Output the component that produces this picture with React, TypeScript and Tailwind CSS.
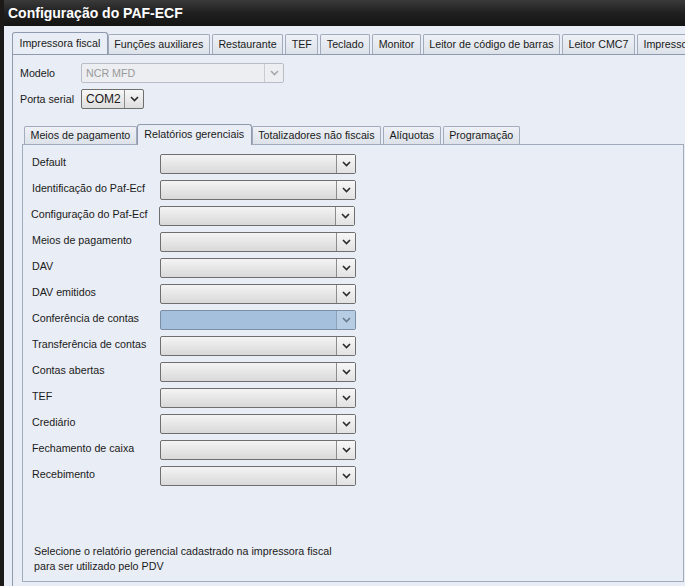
import React from "react";

const topTabs = [
  "Impressora fiscal",
  "Funções auxiliares",
  "Restaurante",
  "TEF",
  "Teclado",
  "Monitor",
  "Leitor de código de barras",
  "Leitor CMC7",
  "Impressora de cozinha",
];

const innerTabs = [
  "Meios de pagamento",
  "Relatórios gerenciais",
  "Totalizadores não fiscais",
  "Alíquotas",
  "Programação",
];

const rows = [
  "Default",
  "Identificação do Paf-Ecf",
  "Configuração do Paf-Ecf",
  "Meios de pagamento",
  "DAV",
  "DAV emitidos",
  "Conferência de contas",
  "Transferência de contas",
  "Contas abertas",
  "TEF",
  "Crediário",
  "Fechamento de caixa",
  "Recebimento",
];

function Chevron({ color = "#2b2b2b" }: { color?: string }) {
  return (
    <svg width="9" height="6" viewBox="0 0 9 6">
      <path d="M1 1 L4.5 4.5 L8 1" fill="none" stroke={color} strokeWidth="1.6" />
    </svg>
  );
}

function Combo({
  width,
  value,
  disabled,
  selected,
}: {
  width: string;
  value?: string;
  disabled?: boolean;
  selected?: boolean;
}) {
  if (disabled) {
    return (
      <div className={`${width} h-[20px] flex rounded-[2px] border border-[#b9bec6] bg-[#eceef1]`}>
        <div className="flex-1 pl-[4px] leading-[18px] text-[#9a9a9a]">{value}</div>
        <div className="w-[19px] flex items-center justify-center border-l border-[#c8ccd2]">
          <Chevron color="#a8a8a8" />
        </div>
      </div>
    );
  }
  if (selected) {
    return (
      <div className={`${width} h-[20px] flex rounded-[2px] border border-[#7a8ea6] bg-[#a4c0dc]`}>
        <div className="flex-1 pl-[4px] leading-[18px]">{value}</div>
        <div className="w-[19px] flex items-center justify-center border-l border-[#8aa2bc] bg-[#b6cde4]">
          <Chevron color="#6a7a8c" />
        </div>
      </div>
    );
  }
  return (
    <div className={`${width} h-[20px] flex rounded-[2px] border border-[#6f6f6f] bg-gradient-to-b from-[#f4f4f4] to-[#d9d9d9]`}>
      <div className="flex-1 pl-[4px] leading-[18px] text-[#111]">{value}</div>
      <div className="w-[19px] flex items-center justify-center border-l border-[#8c8c8c] bg-gradient-to-b from-[#f7f7f7] to-[#e2e2e2]">
        <Chevron />
      </div>
    </div>
  );
}

function Tab({ label, active, small }: { label: string; active?: boolean; small?: boolean }) {
  if (active) {
    return (
      <div
        className={`relative z-10 -mb-px ${small ? "h-[21px] leading-[19px]" : "h-[23px] leading-[20px]"} px-[6.5px] -mx-[2px] border border-b-0 border-[#8f9aae] rounded-t-[3px] bg-[#e9edf5] whitespace-nowrap`}
      >
        {label}
      </div>
    );
  }
  return (
    <div
      className={`${small ? "h-[18px] leading-[17px]" : "h-[20px] leading-[19px]"} px-[5.5px] border border-b-0 border-[#a2abbc] rounded-t-[2px] bg-gradient-to-b from-[#eef1f6] to-[#dde2ea] whitespace-nowrap`}
    >
      {label}
    </div>
  );
}

export default function App() {
  return (
    <div
      className="w-[685px] h-[586px] overflow-hidden flex flex-col bg-[#e9edf5] text-[10.7px] text-[#1a1a1a] border-l-[4px] border-[#1c1a18]"
      style={{ fontFamily: '"Liberation Sans", Arial, sans-serif' }}
    >
      {/* Title bar */}
      <div className="h-[26px] shrink-0 -ml-[4px] pl-[8px] flex items-center bg-gradient-to-b from-[#3a3a3a] via-[#202020] to-[#141414] text-white text-[14px] font-bold">
        Configuração do PAF-ECF
      </div>

      {/* Top tabs */}
      <div className="pl-[10px] pt-[6px] flex items-end gap-[2px] whitespace-nowrap overflow-hidden">
        {topTabs.map((t, i) => (
          <Tab key={t} label={t} active={i === 0} />
        ))}
      </div>

      {/* Outer panel */}
      <div className="flex-1 ml-[8px] border-t border-l border-[#8f9aae] pl-[7px] pt-[8px] flex flex-col">
        <div className="flex items-center h-[20px]">
          <span className="w-[61px]">Modelo</span>
          <Combo width="w-[203px]" value="NCR MFD" disabled />
        </div>
        <div className="flex items-center h-[20px] mt-[6px]">
          <span className="w-[61px]">Porta serial</span>
          <div className="w-[63px] h-[20px] flex rounded-[2px] border border-[#6f6f6f] bg-gradient-to-b from-[#f7f7f7] to-[#dedede]">
            <div className="flex-1 pl-[4px] leading-[18px] text-[12px]">COM2</div>
            <div className="w-[19px] flex items-center justify-center border-l border-[#8c8c8c]">
              <Chevron />
            </div>
          </div>
        </div>

        {/* Inner tabs */}
        <div className="mt-[15px] pl-[4px] flex items-end gap-[2px]">
          {innerTabs.map((t, i) => (
            <Tab key={t} label={t} active={i === 1} small />
          ))}
        </div>

        {/* Inner panel */}
        <div className="ml-[2px] w-[662px] h-[438px] border border-[#a2abbc] pl-[9px] pt-[9px] flex flex-col">
          <div className="flex flex-col gap-[6px]">
            {rows.map((r, i) => (
              <div key={r} className="flex items-center h-[20px]">
                <span className={`w-[128px] -mt-[3px] ${i === 2 ? "-ml-px" : ""}`}>{r}</span>
                <Combo width="w-[196px]" selected={i === 6} />
              </div>
            ))}
          </div>
          <div className="mt-[58px] pl-[2px] leading-[15px]">
            <div>Selecione o relatório gerencial cadastrado na impressora fiscal</div>
            <div>para ser utilizado pelo PDV</div>
          </div>
        </div>
      </div>
    </div>
  );
}
